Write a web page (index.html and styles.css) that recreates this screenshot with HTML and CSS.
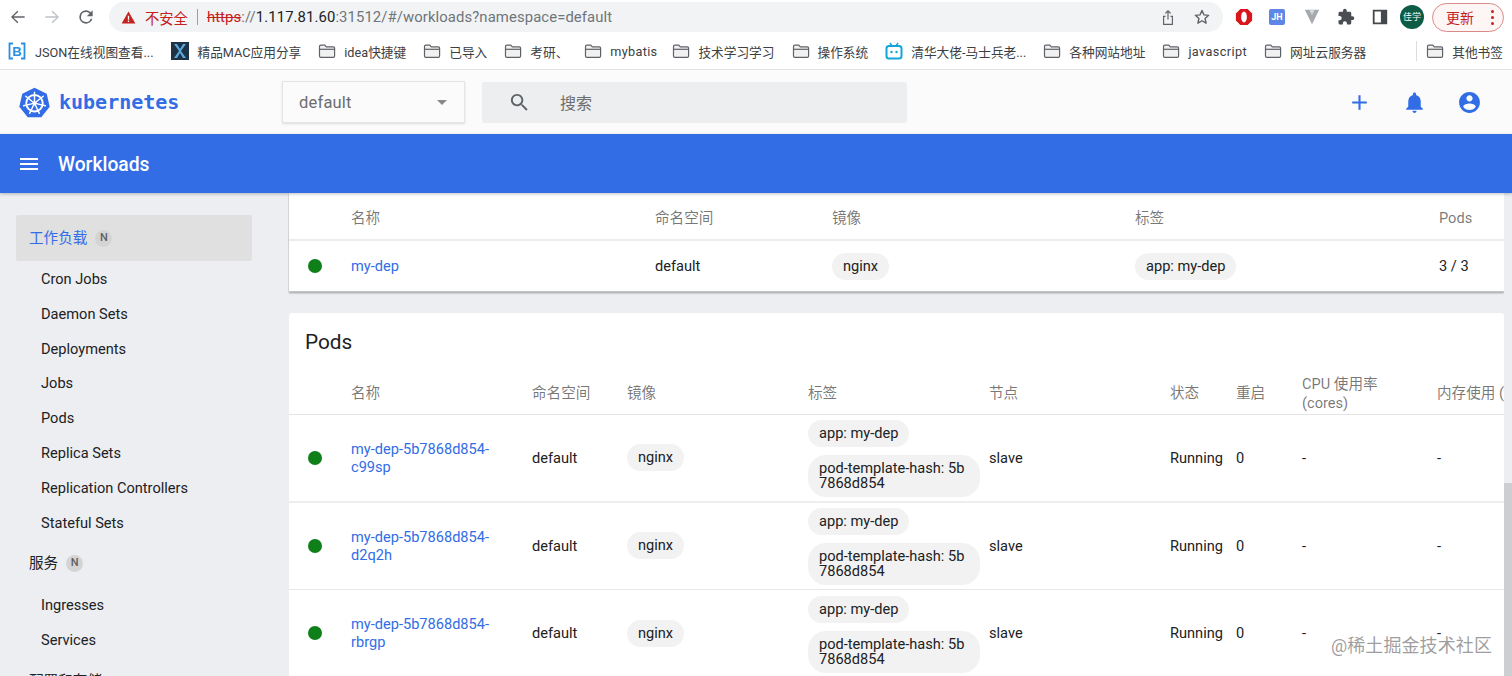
FILE: index.html
```html
<!DOCTYPE html>
<html lang="zh">
<head>
<meta charset="utf-8">
<title>Workloads - Kubernetes Dashboard</title>
<link rel="stylesheet" href="styles.css">
</head>
<body>
<svg class="defs" width="0" height="0" aria-hidden="true">
  <symbol id="folder" viewBox="0 0 18 16"><path d="M1.500 3.500c0-.8.5-1.300 1.300-1.300h4l1.500 1.600h7c.8 0 1.300.5 1.300 1.300v8c0 .8-.5 1.300-1.300 1.300H2.800c-.8 0-1.300-.5-1.300-1.300z" fill="#f1f1f1" stroke="#5f6368" stroke-width="1.200"/><path d="M1.800 6.300h14.400" stroke="#5f6368" stroke-width="1.200" fill="none"/></symbol>
</svg>
<div class="page">
  <div class="toolbar">
    <svg class="nav-icon" viewBox="0 0 24 24"><path d="M20 11.200H6.800l5.600-5.600L11.200 4.400 3.600 12l7.600 7.600 1.200-1.200-5.600-5.600H20z" fill="#5f6368"/></svg>
    <svg class="nav-icon" viewBox="0 0 24 24"><path d="M4 11.200h13.200l-5.600-5.600 1.200-1.200 7.600 7.600-7.600 7.600-1.200-1.200 5.600-5.600H4z" fill="#bdc1c6"/></svg>
    <svg class="nav-icon" viewBox="0 0 24 24"><path d="M17.650 6.350A7.960 7.960 0 0 0 12 4a8 8 0 1 0 7.730 10h-2.080A6 6 0 1 1 12 6c1.660 0 3.140.69 4.220 1.780L13 11h7V4z" fill="#5f6368"/></svg>
    <div class="omnibox">
      <svg class="warn" viewBox="0 0 16 16"><path d="M8 1.500 15.300 14.500H.7z" fill="#c5221f"/><path d="M7.300 6h1.400v4.500H7.300zM7.300 11.300h1.400v1.400H7.300z" fill="#fff"/></svg>
      <span class="unsafe">不安全</span>
      <span class="omni-divider"></span>
      <span class="url"><s class="url-scheme">https</s><span class="url-dim">://</span><span class="url-host">1.117.81.60</span><span class="url-dim">:31512/#/workloads?namespace=default</span></span>
      <span class="omni-spacer"></span>
      <svg class="omni-icon" viewBox="0 0 24 24"><path d="M12 3.500 8.300 7.200l1 1 2-2V15h1.400V6.200l2 2 1-1zM6 10.500h3v1.400H7.400v8.200h9.200v-8.200H15v-1.400h3V21.500H6z" fill="#5f6368"/></svg>
      <svg class="omni-icon" viewBox="0 0 24 24"><path d="m12 4.200 2.300 5.200 5.700.6-4.300 3.800 1.200 5.600L12 16.500l-4.900 2.900 1.200-5.600L4 10l5.700-.6z" fill="none" stroke="#5f6368" stroke-width="1.700" stroke-linejoin="round"/></svg>
    </div>
    <div class="extensions">
      <svg class="ext" viewBox="0 0 20 20"><path d="M6 1h8l5 5v8l-5 5H6l-5-5V6z" fill="#d9161c"/><ellipse cx="10" cy="10" rx="3.200" ry="6" fill="#fff"/></svg>
      <span class="ext-jh">JH</span>
      <svg class="ext" viewBox="0 0 20 20"><path d="M2 2h16l-8 16z" fill="#a5a9ad"/><path d="M7 2h6l-3 6z" fill="#d4d6d8"/></svg>
      <svg class="ext" viewBox="0 0 24 24"><path d="M20.500 11H19V7c0-1.100-.9-2-2-2h-4V3.500C13 2.120 11.880 1 10.500 1S8 2.120 8 3.500V5H4c-1.100 0-1.990.9-1.990 2v3.800H3.500c1.490 0 2.700 1.210 2.700 2.700s-1.210 2.700-2.700 2.700H2V20c0 1.100.9 2 2 2h3.800v-1.500c0-1.490 1.210-2.700 2.700-2.700 1.490 0 2.700 1.210 2.700 2.700V22H17c1.100 0 2-.9 2-2v-4h1.500c1.380 0 2.500-1.120 2.500-2.500S21.880 11 20.500 11z" fill="#4a4d51"/></svg>
      <svg class="ext" viewBox="0 0 20 20"><path d="M3 3h14v14H3z" fill="none" stroke="#45484c" stroke-width="2"/><path d="M11 3h6v14h-6z" fill="#45484c"/></svg>
      <span class="avatar">佳学</span>
      <span class="update"><span>更新</span><span class="update-dots"><i></i><i></i><i></i></span></span>
    </div>
  </div>

  <div class="bookmarks">
    <span class="bm bm-first"><svg class="bm-icon bm-icon-lg" viewBox="0 0 18 18"><path d="M5 1.500H1.500v15H5M13 1.500h3.500v15H13" fill="none" stroke="#2a8fe0" stroke-width="1.800"/><text x="9" y="13.800" class="bm-b">B</text></svg>JSON在线视图查看...</span>
    <span class="bm"><svg class="bm-icon bm-icon-lg" viewBox="0 0 18 18"><path d="M0 0h18v18H0z" fill="#1d3345"/><path d="m3 2 5 7-5 7h3l3-5 3 5h3l-5-7 5-7h-3L9 7 6 2z" fill="#5aa9dc"/></svg>精品MAC应用分享</span>
    <span class="bm"><svg class="bm-icon"><use href="#folder"/></svg>idea快捷键</span>
    <span class="bm"><svg class="bm-icon"><use href="#folder"/></svg>已导入</span>
    <span class="bm bm-kaoyan"><svg class="bm-icon"><use href="#folder"/></svg>考研、</span>
    <span class="bm bm-mybatis"><svg class="bm-icon"><use href="#folder"/></svg><span class="bm-wide">mybatis</span></span>
    <span class="bm"><svg class="bm-icon"><use href="#folder"/></svg>技术学习学习</span>
    <span class="bm"><svg class="bm-icon"><use href="#folder"/></svg>操作系统</span>
    <span class="bm"><svg class="bm-icon bm-icon-lg" viewBox="0 0 18 18"><path d="M5 1l2 3M13 1l-2 3" stroke="#12a5d8" stroke-width="1.500"/><rect x="1.500" y="4" width="15" height="12.500" rx="2.500" fill="none" stroke="#12a5d8" stroke-width="2"/><circle cx="6.500" cy="10" r="1.200" fill="#12a5d8"/><circle cx="11.500" cy="10" r="1.200" fill="#12a5d8"/></svg>清华大佬-马士兵老...</span>
    <span class="bm"><svg class="bm-icon"><use href="#folder"/></svg>各种网站地址</span>
    <span class="bm"><svg class="bm-icon"><use href="#folder"/></svg><span class="bm-wider">javascript</span></span>
    <span class="bm"><svg class="bm-icon"><use href="#folder"/></svg>网址云服务器</span>
    <span class="bm-spacer"></span>
    <span class="bm-divider"></span>
    <span class="bm"><svg class="bm-icon"><use href="#folder"/></svg>其他书签</span>
  </div>

  <header class="k-header">
    <div class="brand">
      <svg class="k-logo" viewBox="0 0 32 32">
        <path d="M16 .8 28.600 6.900 31.700 20.500 23 31.300H9L.3 20.500 3.400 6.900z" fill="#326de6"/>
        <circle cx="16" cy="16.800" r="8.500" fill="none" stroke="#fff" stroke-width="1.900"/>
        <circle cx="16" cy="16.800" r="2.200" fill="#fff"/>
        <path fill="none" stroke="#fff" stroke-width="1.500" stroke-linecap="round" d="M16 14.800V5.300M17.600 15.500 25 9.600M18 17.200 27.200 19.400M16.900 18.600 21 27.200M15.100 18.600 11 27.200M14 17.200 4.800 19.400M14.400 15.500 7 9.600"/>
      </svg>
      <span class="k-word">kubernetes</span>
    </div>
    <div class="ns-select"><span>default</span><i class="ns-caret"></i></div>
    <div class="search">
      <svg class="search-icon" viewBox="0 0 24 24"><path d="M15.500 14h-.79l-.28-.27C15.410 12.590 16 11.110 16 9.500 16 5.910 13.090 3 9.500 3S3 5.910 3 9.500 5.910 16 9.500 16c1.610 0 3.090-.59 4.230-1.570l.27.28v.79l5 4.990L20.490 19l-4.990-5zm-6 0C7.010 14 5 11.990 5 9.500S7.010 5 9.500 5 14 7.010 14 9.500 11.990 14 9.500 14z"/></svg>
      <span>搜索</span>
    </div>
    <div class="k-actions">
      <svg class="k-act" viewBox="0 0 24 24"><path d="M19 13h-6v6h-2v-6H5v-2h6V5h2v6h6v2z"/></svg>
      <svg class="k-act" viewBox="0 0 24 24"><path d="M12 22c1.100 0 2-.9 2-2h-4c0 1.100.89 2 2 2zm6-6v-5c0-3.070-1.640-5.640-4.500-6.320V4c0-.83-.67-1.500-1.500-1.500s-1.500.67-1.500 1.500v.68C7.630 5.360 6 7.920 6 11v5l-2 2v1h16v-1l-2-2z"/></svg>
      <svg class="k-act" viewBox="0 0 24 24"><path d="M12 2C6.480 2 2 6.480 2 12s4.480 10 10 10 10-4.480 10-10S17.520 2 12 2zm0 3c1.660 0 3 1.340 3 3s-1.340 3-3 3-3-1.340-3-3 1.340-3 3-3zm0 14.200c-2.500 0-4.710-1.280-6-3.220.03-1.990 4-3.080 6-3.080 1.990 0 5.970 1.090 6 3.080-1.290 1.940-3.500 3.220-6 3.220z"/></svg>
    </div>
  </header>

  <div class="title-bar">
    <svg class="menu-icon" viewBox="0 0 24 24"><path d="M3 18h18v-2H3v2zm0-5h18v-2H3v2zm0-7v2h18V6H3z"/></svg>
    <span class="title-text">Workloads</span>
  </div>

  <div class="body">
    <nav class="sidebar">
      <div class="nav-group nav-active">工作负载 <span class="ns-badge">N</span></div>
      <div class="nav-item">Cron Jobs</div>
      <div class="nav-item">Daemon Sets</div>
      <div class="nav-item">Deployments</div>
      <div class="nav-item">Jobs</div>
      <div class="nav-item">Pods</div>
      <div class="nav-item">Replica Sets</div>
      <div class="nav-item">Replication Controllers</div>
      <div class="nav-item">Stateful Sets</div>
      <div class="nav-group">服务 <span class="ns-badge">N</span></div>
      <div class="nav-item">Ingresses</div>
      <div class="nav-item">Services</div>
      <div class="nav-group">配置和存储</div>
    </nav>
    <main class="content">
      <section class="card card-top">
        <div class="row dep-grid head-row dep-head">
          <span></span><span>名称</span><span>命名空间</span><span>镜像</span><span>标签</span><span>Pods</span>
        </div>
        <div class="row dep-grid dep-row">
          <i class="dot"></i><a class="link">my-dep</a><span>default</span><span><b class="chip">nginx</b></span><span><b class="chip">app: my-dep</b></span><span>3 / 3</span>
        </div>
      </section>
      <section class="card card-pods">
        <h2 class="card-title">Pods</h2>
        <div class="row pod-grid head-row pod-head">
          <span></span><span>名称</span><span>命名空间</span><span>镜像</span><span>标签</span><span>节点</span><span>状态</span><span>重启</span><span class="two-line">CPU 使用率 (cores)</span><span class="nowrap">内存使用 (</span>
        </div>
        <div class="row pod-grid pod-row pod-row-first">
          <i class="dot"></i><a class="link link-wrap">my-dep-5b7868d854-c99sp</a><span>default</span><span><b class="chip">nginx</b></span>
          <span class="chips"><b class="chip">app: my-dep</b><b class="chip chip-long">pod-template-hash: 5b7868d854</b></span>
          <span>slave</span><span>Running</span><span>0</span><span>-</span><span>-</span>
        </div>
        <div class="row pod-grid pod-row">
          <i class="dot"></i><a class="link link-wrap">my-dep-5b7868d854-d2q2h</a><span>default</span><span><b class="chip">nginx</b></span>
          <span class="chips"><b class="chip">app: my-dep</b><b class="chip chip-long">pod-template-hash: 5b7868d854</b></span>
          <span>slave</span><span>Running</span><span>0</span><span>-</span><span>-</span>
        </div>
        <div class="row pod-grid pod-row">
          <i class="dot"></i><a class="link link-wrap">my-dep-5b7868d854-rbrgp</a><span>default</span><span><b class="chip">nginx</b></span>
          <span class="chips"><b class="chip">app: my-dep</b><b class="chip chip-long">pod-template-hash: 5b7868d854</b></span>
          <span>slave</span><span>Running</span><span>0</span><span>-</span><span>-</span>
        </div>
      </section>
    </main>
    <div class="scrollbar"><div class="scroll-thumb"></div></div>
  </div>
  <div class="watermark">@稀土掘金技术社区</div>
</div>
</body>
</html>
```
FILE: styles.css
```css
* { box-sizing: border-box; }
html, body { margin: 0; height: 100%; overflow: hidden; }
body { font-family: Roboto, "Noto Sans CJK SC", sans-serif; font-size: 14.6px; color: #202124; background: #eceef1; }
.defs { position: absolute; }
.page { position: relative; width: 1512px; height: 676px; overflow: hidden; display: flex; flex-direction: column; }

.toolbar { height: 35px; flex: none; background: #fff; display: flex; align-items: center; padding: 0 8px 1px 8px; }
.nav-icon { width: 20px; height: 20px; flex: none; margin-right: 14px; }
.omnibox { width: 1114px; height: 30px; margin-left: -1px; background: #f1f3f4; border-radius: 15px; display: flex; align-items: center; padding: 0 11px 0 12px; flex: none; }
.warn { width: 15px; height: 15px; flex: none; }
.unsafe { color: #c5221f; font-size: 14.300px; margin-left: 9px; }
.omni-divider { width: 1px; height: 16px; background: #9aa0a6; margin: 0 9px 0 9px; }
.url { font-size: 14.850px; white-space: nowrap; letter-spacing: .1px; }
.url-scheme { color: #c5221f; }
.url-dim { color: #70757a; }
.url-host { color: #202124; }
.omni-spacer { flex: 1; }
.omni-icon { width: 20px; height: 20px; flex: none; margin-left: 14px; }
.extensions { display: flex; align-items: center; margin-left: 12px; flex: 1; }
.ext { width: 18px; height: 18px; flex: none; margin-right: 16px; }
.ext-jh { width: 16px; height: 16px; flex: none; margin-right: 18px; border-radius: 2px; background: #5e86e8; color: #fff; font-size: 9px; font-weight: 700; text-align: center; line-height: 16px; }
.avatar { width: 24px; height: 24px; flex: none; border-radius: 50%; background: #0d5c45; color: #fff; font-size: 9px; text-align: center; line-height: 24px; margin-left: -5px; }
.update { width: 72px; height: 29px; flex: none; margin-left: 8px; border: 1px solid #d98a86; border-radius: 15px; color: #c5221f; background: #fdf6f5; display: flex; align-items: center; justify-content: space-between; padding: 0 9px 0 13px; font-size: 14px; }
.update-dots { display: flex; flex-direction: column; gap: 3px; }
.update-dots i { width: 3px; height: 3px; border-radius: 50%; background: #c5221f; }

.bookmarks { height: 35px; flex: none; background: #fff; border-bottom: 1px solid #e2e3e5; display: flex; align-items: center; padding: 0 9px 2px 8px; font-size: 12.700px; color: #3c4043; white-space: nowrap; }
.bm { display: flex; align-items: center; gap: 8px; margin-right: 17px; }
.bm-first { gap: 9px; margin-right: 18px; }
.bm-kaoyan { margin-right: 16px; }
.bm-mybatis { margin-right: 15px; }
.bm-wide { letter-spacing: .3px; }
.bm-wider { letter-spacing: .4px; }
.bm:last-child { margin-right: 0; }
.bm-icon { width: 18px; height: 16px; flex: none; overflow: visible; }
.bm-icon-lg { height: 18px; }
.bm-b { font: 700 13px "Liberation Sans", sans-serif; fill: #2a8fe0; text-anchor: middle; }
.bm-spacer { flex: 1; }
.bm-divider { width: 1px; height: 20px; background: #dadce0; margin-right: 9px; }

.k-header { height: 64px; flex: none; background: #fbfbfc; display: flex; align-items: center; padding: 0 0 0 19px; }
.brand { width: 263px; display: flex; align-items: center; gap: 9px; flex: none; }
.k-logo { width: 31px; height: 31px; flex: none; }
.k-word { font-family: "DejaVu Sans Mono", monospace; font-weight: 700; font-size: 20px; color: #326de6; }
.ns-select { width: 183px; height: 42px; flex: none; background: #fbfbfc; border: 1px solid #e4e5e7; box-shadow: 0 1px 2px rgba(0,0,0,.12); display: flex; align-items: center; justify-content: space-between; padding: 0 17px 0 16px; font-size: 16.500px; letter-spacing: .2px; color: #6d6d6d; }
.ns-caret { width: 0; height: 0; border-left: 5px solid transparent; border-right: 5px solid transparent; border-top: 5px solid #8a8a8a; }
.search { width: 425px; height: 41px; flex: none; margin-left: 17px; background: #eceef0; border-radius: 2px; display: flex; align-items: center; padding-left: 26px; font-size: 16px; color: #6d6d6d; gap: 30px; }
.search-icon { width: 23px; height: 23px; fill: #5f6368; flex: none; margin-right: -1px; }
.k-actions { margin-left: auto; display: flex; align-items: center; gap: 30px; padding-right: 30px; }
.k-act { width: 25px; height: 25px; fill: #326de6; flex: none; }

.title-bar { height: 59px; flex: none; background: #326de6; color: #fff; display: flex; align-items: center; padding-left: 17px; gap: 17px; box-shadow: 0 1px 3px rgba(0,0,0,.25); position: relative; z-index: 1; }
.menu-icon { width: 24px; height: 24px; fill: #fff; flex: none; }
.title-text { font-size: 19.300px; font-weight: 500; margin-top: 2px; }

.body { flex: 1; min-height: 0; display: flex; overflow: hidden; }
.sidebar { width: 288px; flex: none; padding: 22px 36px 0 16px; background: #eceef1; }
.nav-group { height: 48px; padding: 0 0 1px 13px; display: flex; align-items: center; gap: 8px; line-height: 20px; color: #202124; flex: none; }
.nav-active { height: 46px; padding-bottom: 0; margin-bottom: .6px; background: #e0e0e0; color: #326de6; border-radius: 2px; }
.ns-badge { width: 17px; height: 17px; border-radius: 50%; background: #d4d4d4; color: #5f5f5f; font-size: 11px; font-weight: 500; display: flex; align-items: center; justify-content: center; }
.nav-item { height: 34.800px; padding-left: 25px; display: flex; align-items: center; color: #202124; }

.content { flex: 1; min-width: 0; padding-left: 1px; display: flex; flex-direction: column; gap: 21px; overflow: hidden; }
.card { background: #fff; overflow: hidden; flex: none; }
.card-top { box-shadow: 0 1px 2px rgba(0,0,0,.35); height: 99px; border-bottom: 1px solid #c4c5c7; }
.card-pods { border-radius: 3px 3px 0 0; }
.card-title { margin: 0; height: 58px; padding: 17px 16px 0; font-size: 20.800px; font-weight: 400; line-height: 24px; color: #202124; }

.row { display: grid; align-items: center; padding-left: 19px; border-bottom: 1px solid #e8e8e8; }
.dep-grid { grid-template-columns: 43px 304px 177px 303px 304px 1fr; }
.pod-grid { grid-template-columns: 43px 181px 95px 181px 181px 181px 66px 66px 135px 1fr; }
.head-row { color: rgba(0,0,0,.54); height: 48px; line-height: 20px; border-bottom: 2px solid #ececec; }
.dep-head { padding-top: 3px; }
.pod-head { height: 44px; border-bottom: 1px solid #e4e4e4; }
.two-line { line-height: 19px; padding-right: 30px; margin-top: 2px; }
.nowrap { white-space: nowrap; }
.dep-row { height: 50px; border-bottom: 0; }
.pod-row { height: 87.500px; }
.pod-row-first { border-bottom: 2px solid #eeeeee; }
.dot { width: 14px; height: 14px; border-radius: 50%; background: #0f7f1a; display: block; }
.link { color: #326de6; line-height: 18px; }
.link-wrap { max-width: 160px; }
.chips { display: flex; flex-direction: column; align-items: flex-start; gap: 8px; padding-top: 2px; }
.chip { display: inline-block; font-weight: 400; padding: 6px 11px; line-height: 15px; border-radius: 14px; background: #f2f2f2; color: #202124; }
.chip-long { width: 172px; word-break: break-all; border-radius: 18px; }

.scrollbar { width: 8px; flex: none; background: #eceef1; display: flex; flex-direction: column; justify-content: flex-end; }
.scroll-thumb { height: 193px; background: #cdced1; }

.watermark { position: absolute; right: 20px; bottom: 19px; font-size: 18px; letter-spacing: .1px; color: rgba(120,120,120,.72); }
```
